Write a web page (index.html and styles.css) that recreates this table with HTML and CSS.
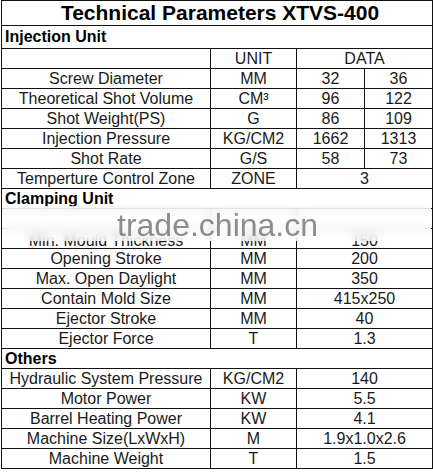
FILE: index.html
```html
<!DOCTYPE html>
<html>
<head>
<meta charset="utf-8">
<link rel="stylesheet" href="styles.css">
</head>
<body>
<div class="sheet">
<table class="spec">
  <colgroup>
    <col class="c-name"><col class="c-unit"><col class="c-d1"><col class="c-d2">
  </colgroup>
  <tr class="title-row"><td colspan="4" class="title">Technical Parameters XTVS-400</td></tr>
  <tr class="sec-row first"><td colspan="4" class="sec">Injection Unit</td></tr>
  <tr><td></td><td>UNIT</td><td colspan="2">DATA</td></tr>
  <tr><td>Screw Diameter</td><td>MM</td><td>32</td><td>36</td></tr>
  <tr><td>Theoretical Shot Volume</td><td>CM³</td><td>96</td><td>122</td></tr>
  <tr><td>Shot Weight(PS)</td><td>G</td><td>86</td><td>109</td></tr>
  <tr><td>Injection Pressure</td><td>KG/CM2</td><td>1662</td><td>1313</td></tr>
  <tr><td>Shot Rate</td><td>G/S</td><td>58</td><td>73</td></tr>
  <tr><td>Temperture Control Zone</td><td>ZONE</td><td colspan="2">3</td></tr>
  <tr class="sec-row"><td colspan="4" class="sec">Clamping Unit</td></tr>
  <tr class="hidden-row"><td></td><td></td><td colspan="2"></td></tr>
  <tr class="cut-row"><td>Min. Mould Thickness</td><td>MM</td><td colspan="2">150</td></tr>
  <tr><td>Opening Stroke</td><td>MM</td><td colspan="2">200</td></tr>
  <tr><td>Max. Open Daylight</td><td>MM</td><td colspan="2">350</td></tr>
  <tr><td>Contain Mold Size</td><td>MM</td><td colspan="2">415x250</td></tr>
  <tr><td>Ejector Stroke</td><td>MM</td><td colspan="2">40</td></tr>
  <tr><td>Ejector Force</td><td>T</td><td colspan="2">1.3</td></tr>
  <tr class="sec-row"><td colspan="4" class="sec">Others</td></tr>
  <tr><td>Hydraulic System Pressure</td><td>KG/CM2</td><td colspan="2">140</td></tr>
  <tr><td>Motor Power</td><td>KW</td><td colspan="2">5.5</td></tr>
  <tr><td>Barrel Heating Power</td><td>KW</td><td colspan="2">4.1</td></tr>
  <tr><td>Machine Size(LxWxH)</td><td>M</td><td colspan="2">1.9x1.0x2.6</td></tr>
  <tr><td>Machine Weight</td><td>T</td><td colspan="2">1.5</td></tr>
</table>
<div class="blur-band"></div>
<div class="watermark">trade.china.cn</div>
</div>
</body>
</html>
```
FILE: styles.css
```css
html, body {
  margin: 0;
  padding: 0;
  background: #ffffff;
}
.sheet {
  position: relative;
  width: 433px;
  height: 473px;
  overflow: hidden;
}
.spec {
  margin-left: 1px;
  width: 431px;
  border-collapse: collapse;
  table-layout: fixed;
  font-family: "Liberation Sans", Arial, sans-serif;
  font-size: 16px;
  color: #1a1a1a;
}
.c-name { width: 209px; }
.c-unit { width: 86px; }
.c-d1 { width: 68px; }
.c-d2 { width: 68px; }
.spec td {
  border: 1px solid #111;
  height: 19px;
  padding: 0;
  text-align: center;
  line-height: 18px;
  white-space: nowrap;
}
.spec .title-row td {
  height: 24px;
  font-size: 21px;
  font-weight: bold;
  padding-left: 6px;
  line-height: 24px;
  color: #000;
}
.spec .sec-row td {
  text-align: left;
  font-weight: bold;
  padding-left: 3px;
  color: #000;
}
.spec .sec-row.first td {
  height: 22px;
}
.spec .cut-row td {
  line-height: 14px;
  vertical-align: bottom;
}
.blur-band {
  position: absolute;
  left: 2px;
  top: 206px;
  width: 429px;
  height: 35px;
  background: rgba(255, 255, 255, 0.7);
  backdrop-filter: blur(4px);
}
.watermark {
  position: absolute;
  left: 117px;
  top: 213px;
  font-family: "Liberation Sans", Arial, sans-serif;
  font-size: 32px;
  line-height: 24px;
  color: #8c8c8c;
  white-space: nowrap;
}
```
